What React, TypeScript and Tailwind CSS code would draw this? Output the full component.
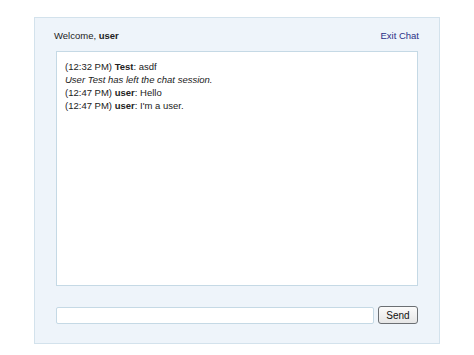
const messages = [
  { time: '12:32 PM', user: 'Test', text: 'asdf' },
  { system: 'User Test has left the chat session.' },
  { time: '12:47 PM', user: 'user', text: 'Hello' },
  { time: '12:47 PM', user: 'user', text: "I'm a user." },
]

const App = () => {
  return (
    <div className="min-h-screen bg-white pt-[17px] font-['Liberation_Sans',Arial,sans-serif] text-[9.5px] text-[#222]">
      <div className="mx-auto w-[406px] border border-[#d3e2ec] bg-[#eef4fa] px-[21px] pt-[11px] pb-[19px]">
        {/* Header */}
        <div className="flex justify-between items-center h-[14px] mb-[8px] -ml-[2px] -mr-[1px]">
          <p>
            Welcome, <b>user</b>
          </p>
          <a href="#" className="text-[#2b2f86]">Exit Chat</a>
        </div>

        {/* Chat box */}
        <div className="h-[235px] border border-[#c5d9e5] bg-white px-[8px] py-[8px] leading-[13px]">
          {messages.map((m, i) =>
            m.system ? (
              <p key={i} className="italic">{m.system}</p>
            ) : (
              <p key={i}>
                ({m.time}) <b>{m.user}</b>: {m.text}
              </p>
            )
          )}
        </div>

        {/* Input */}
        <div className="flex items-center gap-[4px] mt-[20px]">
          <input
            type="text"
            className="flex-1 h-[17px] border border-[#c5d9e5] bg-white rounded-[2px] outline-none"
          />
          <button className="h-[18px] w-[40px] border border-[#6b6f73] rounded-[3px] bg-gradient-to-b from-[#fbfbfb] to-[#e6e6e6] text-[10px] text-[#111]">
            Send
          </button>
        </div>
      </div>
    </div>
  )
}

export default App
